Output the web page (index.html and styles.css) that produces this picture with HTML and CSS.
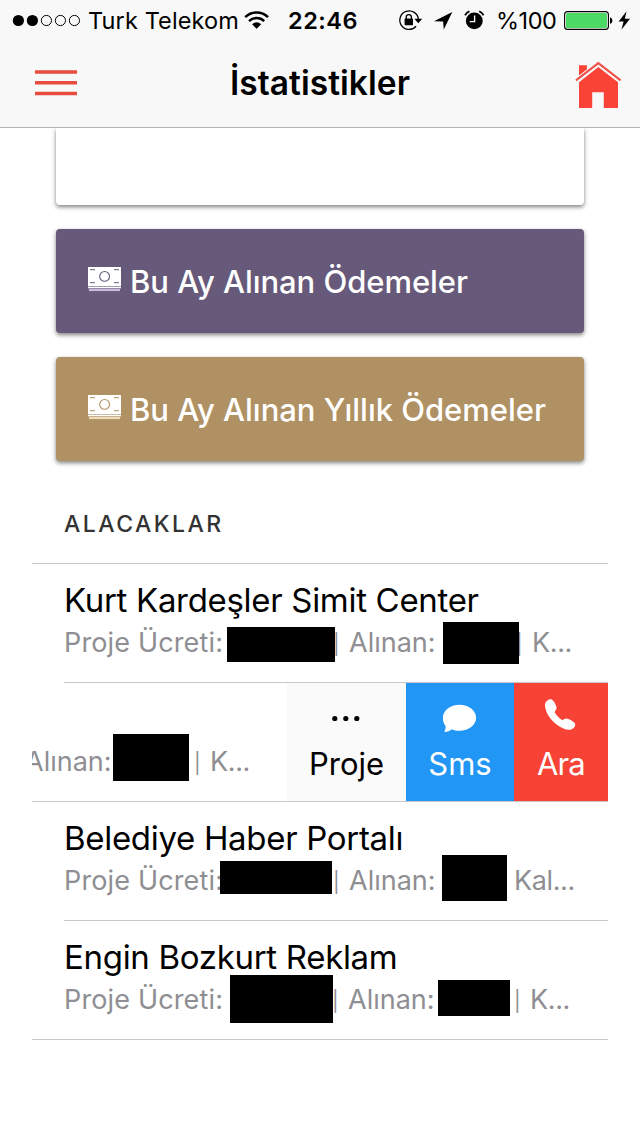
FILE: index.html
```html
<!DOCTYPE html>
<html lang="tr">
<head>
<meta charset="utf-8">
<title>İstatistikler</title>
<link rel="stylesheet" href="styles.css">
</head>
<body>
<header class="top">
  <div class="status">
    <svg class="status-icon" width="88" height="40" viewBox="0 0 88 40"><circle cx="18.4" cy="20.5" r="5.6"/><circle cx="32.4" cy="20.5" r="5.6"/><g fill="none" stroke="#000" stroke-width="1"><circle cx="46.4" cy="20.5" r="5.1"/><circle cx="60.4" cy="20.5" r="5.1"/><circle cx="74.4" cy="20.5" r="5.1"/></g></svg>
    <span class="carrier">Turk Telekom</span>
    <svg class="status-icon" width="44" height="40" viewBox="244 0 44 40"><g fill="none" stroke="#000" stroke-width="2.5"><path d="M245.2 17.1a16.2 16.2 0 0 1 22.8 0"/><path d="M249 21.2a10.8 10.8 0 0 1 15.2 0"/></g><path d="M252.1 24.2a6.4 6.4 0 0 1 9 0l-4.5 4.6z"/></svg>
    <span class="clock">22:46</span>
    <svg class="status-icon" width="38" height="40" viewBox="396 0 38 40"><path d="M416.1 26.3A9.3 9.3 0 1 1 418.4 19.5" fill="none" stroke="#000" stroke-width="1.3"/><path d="M414.4 18.8h7.8l-3.900 4.400z"/><rect x="404.6" y="18.6" width="8.4" height="6.6" rx=".6"/><path d="M406.2 19v-1.8a2.6 2.6 0 0 1 5.2 0V19" fill="none" stroke="#000" stroke-width="1.3"/></svg>
    <svg class="status-icon" width="30" height="40" viewBox="434 0 30 40"><path d="M452.3 12.1L434 21.3l9.1.2.7 8z"/></svg>
    <svg class="status-icon" width="32" height="40" viewBox="464 0 32 40"><circle cx="474.3" cy="20.9" r="8.4"/><path d="M465 15.3a11 11 0 0 1 4.4-4M483.6 15.3a11 11 0 0 0-4.4-4" fill="none" stroke="#000" stroke-width="1.8"/><path d="M474.6 15.4v6.2h-5" fill="none" stroke="#f8f8f8" stroke-width="1.4"/></svg>
    <span class="percent">%100</span>
    <svg class="status-icon" width="56" height="40" viewBox="562 0 56 40"><rect x="564.6" y="11.6" width="43.8" height="17.8" rx="3" fill="none" stroke="#000" stroke-width="1.1"/><rect x="566" y="13" width="41" height="15" rx="1.6" fill="#4cd964"/><path d="M610 17.2a3.2 3.4 0 0 1 0 6.6z"/></svg>
    <svg class="status-icon" width="22" height="40" viewBox="618 0 22 40"><path d="M626.6 11.2l-8 10.400h5l-2.2 8.200 8.600-11h-5.200z"/></svg>
  </div>
  <nav class="navbar">
    <svg class="menu" width="42" height="26" viewBox="0 0 42 26"><path d="M0 2h42M0 12.800h42M0 23.400h42" stroke="#e84c3f" stroke-width="3.500"/></svg>
    <h1 class="title">İstatistikler</h1>
    <svg class="home" width="48" height="48" viewBox="574 61 48 48" fill="#f94336"><path d="M579 65.2h7.900v6.200l-7.900 6.400z"/><path d="M598.3 67L618 82.2V108h-14.2V92.2h-11.6V108H579V82.2z"/><path d="M576 80.9l22.300-17.400 22.300 17.400" fill="none" stroke="#f8f8f8" stroke-width="4.600"/><path d="M576 80.4l22.300-17.300 22.300 17.300" fill="none" stroke="#f05045" stroke-width="2"/></svg>
  </nav>
</header>
<main class="content">
  <section class="cards">
    <div class="card card-blank"></div>
    <div class="card card-purple">
      <svg class="cash" width="33" height="25" viewBox="0 0 33 25" fill="#fff"><rect width="33" height="19.4"/><rect y="20" width="33" height="1.3"/><rect x="1" y="22" width="31" height="2.1" fill="#cbb8da"/><g stroke="#66597a" fill="none"><circle cx="16.6" cy="9.4" r="4.9" stroke-width="1.1"/><path d="M2 2.7h5M26 2.7h5M2 15.7h5M26 15.7h5"/></g></svg>
      <span class="label label-month">Bu Ay Alınan Ödemeler</span>
    </div>
    <div class="card card-gold">
      <svg class="cash" width="33" height="25" viewBox="0 0 33 25" fill="#fff"><rect width="33" height="19.4"/><rect y="20" width="33" height="1.3"/><rect x="1" y="22" width="31" height="2.1" fill="#f0dcbc"/><g stroke="#af9163" fill="none"><circle cx="16.6" cy="9.4" r="4.9" stroke-width="1.1"/><path d="M2 2.7h5M26 2.7h5M2 15.7h5M26 15.7h5"/></g></svg>
      <span class="label">Bu Ay Alınan Yıllık Ödemeler</span>
    </div>
  </section>
  <h2 class="section-title">ALACAKLAR</h2>
  <ul class="list">
    <li class="item">
      <div class="item-body">
        <h3 class="name">Kurt Kardeşler Simit Center</h3>
        <p class="meta meta-kurt"><span class="fee">Proje Ücreti:</span><span><span class="bar">|</span>Alınan:</span><span class="rest"><span class="bar">|</span>K...</span><i class="mask kurt-fee"></i><i class="mask kurt-paid"></i></p>
      </div>
    </li>
    <li class="item item-open">
      <p class="meta meta-open"><span class="cut">Alınan:</span><span class="rest"><span class="bar">|</span>K...</span><i class="mask open-paid"></i></p>
      <div class="actions">
        <div class="action project"><svg width="36" height="36" viewBox="0 0 36 36"><circle cx="5.800" cy="18.5" r="2.600"/><circle cx="16.800" cy="18.5" r="2.600"/><circle cx="27.800" cy="18.5" r="2.600"/></svg><span>Proje</span></div>
        <div class="action sms"><svg width="36" height="36" viewBox="442 700 36 36" fill="#fff"><path d="M459.5 704.700c9.300 0 16.600 5.700 16.600 13s-7.300 13-16.600 13c-3 0-5.400-.5-7.700-1.500-1.800 1.500-4.100 2.600-7.600 2.900 1-1.600 1.500-3.500 1.400-6-1.900-2.400-2.700-5.200-2.700-8.400 0-7.300 7.300-13 16.600-13z"/></svg><span>Sms</span></div>
        <div class="action call"><svg width="36" height="36" viewBox="543 700 36 36" fill="#fff"><path d="M545.200 703.300c.8-2.300 3.200-3.900 5.600-4 1.600.2 2.800 1.600 4 3.700 1.200 2.200 2.200 4.300 1.600 6.100-.4 1.200-1.600 2-1.600 3.200.2 1.600 5.600 7.300 7.400 7.700 1.400.2 2-1.400 4-1.500 2 0 7.800 2.900 8.900 5.200.5 2-.8 4.500-3.400 5.600-2.300.9-5.300.6-8.300-.8-8.100-4-14.600-10.400-17.200-17.600-.9-2.700-1.500-5.300-1-7.600z"/></svg><span>Ara</span></div>
      </div>
    </li>
    <li class="item">
      <div class="item-body">
        <h3 class="name">Belediye Haber Portalı</h3>
        <p class="meta meta-belediye"><span class="fee">Proje Ücreti:</span><span><span class="bar">|</span>Alınan:</span><span class="rest">Kal...</span><i class="mask belediye-fee"></i><i class="mask belediye-paid"></i></p>
      </div>
    </li>
    <li class="item item-last">
      <div class="item-body">
        <h3 class="name">Engin Bozkurt Reklam</h3>
        <p class="meta meta-engin"><span class="fee">Proje Ücreti:</span><span><span class="bar">|</span>Alınan:</span><span class="rest"><span class="bar">|</span>K...</span><i class="mask engin-fee"></i><i class="mask engin-paid"></i></p>
      </div>
    </li>
  </ul>
</main>
</body>
</html>
```
FILE: styles.css
```css
* { box-sizing: border-box; margin: 0; padding: 0; }
body { width: 640px; height: 1136px; overflow: hidden; background: #fff; color: #000; font-family: Inter, "Liberation Sans", sans-serif; white-space: nowrap; }
svg { display: block; overflow: visible; flex: none; }

.top { height: 128px; background: #f8f8f8; border-bottom: 1px solid #b2b2b2; }
.status { display: grid; grid-template-columns: 88px 156px 44px 108px 38px 30px 32px 66px 56px 22px; height: 40px; font-size: 23.5px; line-height: 42px; }
.carrier { letter-spacing: .12px; }
.clock { font-weight: 600; letter-spacing: .5px; }
.percent { letter-spacing: -.486px; }
.navbar { display: grid; grid-template-columns: 42px 1fr 48px; align-items: center; height: 87px; padding: 0 18px 1px 35px; }
.title { padding-right: 11px; font-size: 33.5px; font-weight: 600; line-height: 44px; text-align: center; letter-spacing: .04px; }
.home { margin-top: 4px; }

.cards { display: flex; flex-direction: column; gap: 24px; padding: 0 56px; }
.card { display: flex; align-items: center; gap: 9px; height: 104px; padding-left: 32px; border-radius: 4px; box-shadow: 0 2px 4px rgba(0, 0, 0, .5); color: #fff; font-size: 31px; font-weight: 500; line-height: 40px; letter-spacing: -.02px; }
.card-blank { height: 77px; border-radius: 0 0 4px 4px; clip-path: inset(0 -8px -8px -8px); }
.card-purple { background: #66597a; }
.card-gold { background: #af9163; }
.cash { margin-bottom: 4px; }
.label { padding-top: 2px; }
.label-month { letter-spacing: -.045px; }

.section-title { height: 102px; padding: 43px 0 0 64px; color: #333; font-size: 23px; font-weight: 500; line-height: 40px; letter-spacing: 2.45px; }

.list { margin: 0 32px; border-top: 1px solid #c8c7cc; list-style: none; }
.item { height: 119px; padding-left: 32px; }
.item-body { height: 119px; padding-top: 15px; border-bottom: 1px solid #c8c7cc; }
.item-last { padding-left: 0; }
.item-last .item-body { padding-left: 32px; }
.name { font-size: 33px; font-weight: 400; line-height: 42px; letter-spacing: -.31px; }
.meta { display: grid; position: relative; height: 42px; color: #8e8e93; font-size: 27px; line-height: 44px; }
.fee { letter-spacing: .15px; }
.rest { letter-spacing: -.379px; }
.bar { display: inline-block; width: 17px; padding-left: 1px; font-size: 20px; line-height: 20px; vertical-align: 1px; }
.meta-kurt { grid-template-columns: 268px 183px 1fr; }
.meta-belediye { grid-template-columns: 268px 182px 1fr; }
.meta-engin { grid-template-columns: 267px 182px 1fr; }
.mask { position: absolute; background: #000; }
.kurt-fee { left: 163px; top: 6px; width: 108px; height: 35px; }
.kurt-paid { left: 379px; top: 1px; width: 76px; height: 42px; }
.belediye-fee { left: 156px; top: 2px; width: 112px; height: 33px; }
.belediye-paid { left: 378px; top: -4px; width: 65px; height: 46px; }
.engin-fee { left: 166px; top: -3px; width: 103px; height: 48px; }
.engin-paid { left: 374px; top: 2px; width: 72px; height: 36px; }

.item-open { display: flex; padding-left: 0; overflow: hidden; border-bottom: 1px solid #c8c7cc; }
.meta-open { grid-template-columns: 161px 94px; width: 255px; margin-top: 57px; }
.cut { margin-left: -7px; }
.open-paid { left: 81px; top: -6px; width: 76px; height: 47px; }
.actions { display: grid; grid-template-columns: 119px 108px 94px; height: 118px; }
.action { display: flex; flex-direction: column; align-items: center; padding-top: 17px; color: #fff; font-size: 31px; line-height: 40px; }
.action span { padding-top: 8px; }
.project { background: #fafafa; color: #000; }
.sms { background: #2196f5; }
.call { background: #f64336; }
.call span { letter-spacing: -.9px; }
```
